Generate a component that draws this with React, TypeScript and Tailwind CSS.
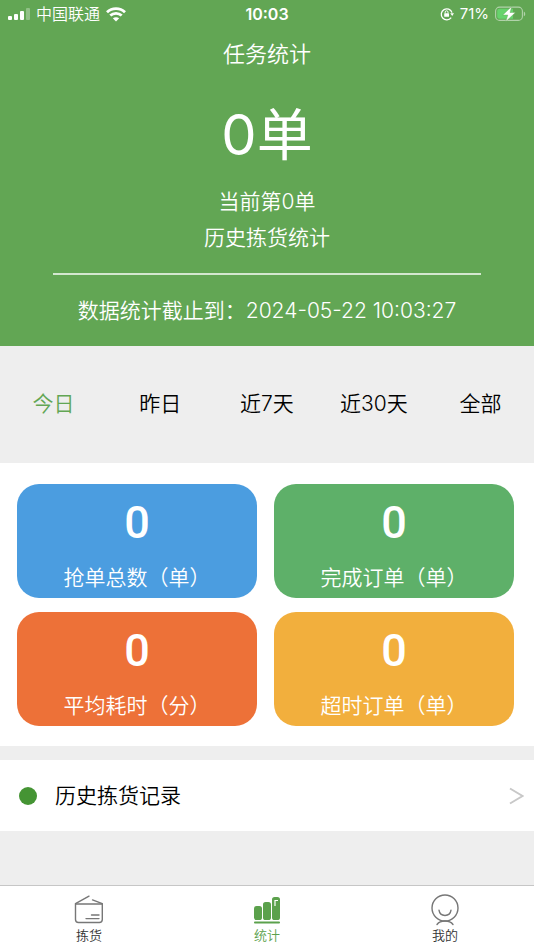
import { useState } from "react";

const ranges = ["今日", "昨日", "近7天", "近30天", "全部"];

const stats = [
  { label: "抢单总数（单）", value: 0, color: "bg-[#4b9de0]" },
  { label: "完成订单（单）", value: 0, color: "bg-[#5eb069]" },
  { label: "平均耗时（分）", value: 0, color: "bg-[#ed7138]" },
  { label: "超时订单（单）", value: 0, color: "bg-[#f2af3d]" },
];

function SignalIcon() {
  return (
    <svg width="22" height="12" viewBox="0 0 22 12" fill="#fff" aria-hidden="true">
      <rect x="0" y="8" width="4" height="4" rx="1" />
      <rect x="6" y="6" width="4" height="6" rx="1" />
      <rect x="12" y="3" width="4" height="9" rx="1" />
      <rect x="18" y="0" width="4" height="12" rx="1" opacity="0.3" />
    </svg>
  );
}

function WifiIcon() {
  return (
    <svg width="20" height="15" viewBox="0 0 20 15" fill="none" stroke="#fff" strokeWidth="2.8" aria-hidden="true">
      <path d="M1 5.2C6 .4 14 .4 19 5.2" />
      <path d="M4.3 8.6C7.5 5.6 12.5 5.6 15.7 8.6" />
      <path d="M10 14.6 6.8 11.3C8.6 9.8 11.4 9.8 13.2 11.3Z" fill="#fff" stroke="none" />
    </svg>
  );
}

function RotationLockIcon() {
  return (
    <svg width="14" height="14" viewBox="0 0 14 14" fill="none" stroke="#fff" strokeWidth="1.3" aria-hidden="true">
      <path d="M11.2 10.6A5.5 5.5 0 1 1 12 5.6" />
      <path d="M10.2 6.2H14L12.2 9Z" fill="#fff" stroke="none" />
      <rect x="4.2" y="6.2" width="4.8" height="3.6" rx=".6" fill="#fff" stroke="none" />
      <path d="M5.2 6.4V5.2a1.4 1.4 0 0 1 2.8 0v1.2" strokeWidth="1" />
    </svg>
  );
}

function BatteryIcon() {
  return (
    <svg width="31" height="16" viewBox="0 0 31 16" aria-hidden="true">
      <rect x=".6" y="1.1" width="26.8" height="13.3" rx="4" fill="none" stroke="#fff" strokeOpacity=".5" strokeWidth="1.1" />
      <path d="M28.8 5.4c1.9.8 1.9 4 0 4.8Z" fill="#fff" fillOpacity=".5" />
      <path d="M4.5 2.7H18V12.8H4.5a2.3 2.3 0 0 1-2.3-2.3V5a2.3 2.3 0 0 1 2.3-2.3Z" fill="#66d36c" />
      <path d="M16.8.4 7.8 9h5L10.8 15.6l9.6-9.1h-5.4Z" fill="#fff" stroke="#62a654" strokeWidth=".4" />
    </svg>
  );
}

function BoxIcon() {
  return (
    <svg width="30" height="30" viewBox="0 0 30 30" fill="none" stroke="#777" strokeWidth="1.4" strokeLinecap="round" aria-hidden="true">
      <path d="M1.5 9H28.3V24.5a3 3 0 0 1-3 3H4.5a3 3 0 0 1-3-3Z" strokeLinejoin="round" />
      <path d="M1.5 8.7 15 1.2M18.5 4.9 28.3 8.7" />
      <path d="M17.5 20H25M12 23.6H25" />
    </svg>
  );
}

function ChartIcon() {
  return (
    <svg width="30" height="30" viewBox="0 0 30 30" fill="#5ba14c" aria-hidden="true">
      <rect x="2" y="11" width="8" height="14" rx="2.6" />
      <rect x="11" y="7" width="8" height="18" rx="2.6" />
      <rect x="20" y="2" width="8" height="23" rx="2.6" />
      <path d="M23 11V5.5H26" fill="none" stroke="#fff" strokeWidth="1.2" />
      <rect x="2" y="26.6" width="26" height="1.8" rx=".9" />
    </svg>
  );
}

function PersonIcon() {
  return (
    <svg width="30" height="32" viewBox="0 0 30 32" fill="none" stroke="#777" strokeWidth="1.4" strokeLinecap="round" aria-hidden="true">
      <circle cx="15" cy="14" r="13" />
      <path d="M9 16.2c1 7 11 7 12 0" />
      <path d="M7 30.5c3.5-4.6 12.5-4.6 16 0" />
    </svg>
  );
}

const navItems = [
  { label: "拣货", Icon: BoxIcon },
  { label: "统计", Icon: ChartIcon },
  { label: "我的", Icon: PersonIcon },
];

export default function App() {
  const [range, setRange] = useState("今日");
  return (
    <div className="flex min-h-screen flex-col bg-[#eeeeee] font-[Inter,'Noto_Sans_CJK_SC',sans-serif] text-[21px] leading-9 font-[350] text-black">
      <header className="bg-[#62a654] pb-[17px] text-center text-white">
        <div className="grid h-7 grid-cols-3 items-center px-2 text-base leading-7">
          <div className="flex items-center gap-1.5 whitespace-nowrap">
            <SignalIcon />
            <span>中国联通</span>
            <WifiIcon />
          </div>
          <time className="font-semibold">10:03</time>
          <div className="flex items-center justify-end gap-1.5">
            <RotationLockIcon />
            <span className="text-[15px] font-normal">71%</span>
            <BatteryIcon />
          </div>
        </div>
        <h1 className="mt-2 text-[22px] font-[350]">任务统计</h1>
        <p className="mt-[27px] mb-[13px] text-[56px] leading-[72px] font-normal">0单</p>
        <p>当前第0单</p>
        <p>历史拣货统计</p>
        <hr className="mx-[10%] mt-[17px] border-t-2 border-[#d3e7cf]" />
        <p className="mt-[18px]">数据统计截止到：2024-05-22 10:03:27</p>
      </header>

      <div className="flex h-[117px] items-center pb-0.5">
        {ranges.map((r) => (
          <button
            key={r}
            type="button"
            onClick={() => setRange(r)}
            className={r === range ? "flex-1 text-[#62a654]" : "flex-1"}
          >
            {r}
          </button>
        ))}
      </div>

      <section className="grid grid-cols-2 gap-x-[17px] gap-y-3.5 bg-white pt-[21px] pr-5 pb-5 pl-[17px]">
        {stats.map((s) => (
          <div key={s.label} className={`flex h-[114px] flex-col items-center rounded-[22px] pt-2 text-white ${s.color}`}>
            <strong className="font-[Roboto,sans-serif] text-[45px] leading-[62px] font-medium">{s.value}</strong>
            <span className="mt-1.5">{s.label}</span>
          </div>
        ))}
      </section>

      <a href="#history" className="mt-3.5 flex h-[71px] items-center bg-white pr-2.5 pl-[19px]">
        <span className="size-[18px] rounded-full bg-[#459434]" />
        <span className="ml-[18px] flex-1">历史拣货记录</span>
        <svg width="15" height="18" viewBox="0 0 15 18" fill="none" stroke="#c8c8c8" strokeWidth="2" aria-hidden="true">
          <path d="M1 1.5 13.5 9 1 16.5" />
        </svg>
      </a>

      <nav className="mt-auto flex h-[65px] border-t border-[#c6c6c6] bg-white pt-2">
        {navItems.map(({ label, Icon }) => (
          <a
            key={label}
            href={"#" + label}
            className={`flex flex-1 flex-col items-center text-[13px] leading-5 ${label === "统计" ? "text-[#5ba14c]" : "text-[#333]"}`}
          >
            <span className="flex h-[31px] items-center">
              <Icon />
            </span>
            {label}
          </a>
        ))}
      </nav>
    </div>
  );
}
